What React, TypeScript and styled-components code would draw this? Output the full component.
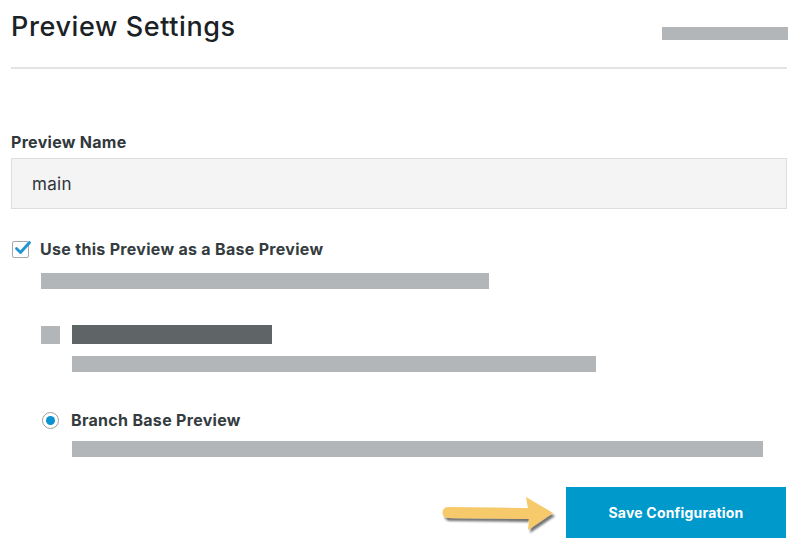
import React from "react";
import styled, { createGlobalStyle } from "styled-components";

const Global = createGlobalStyle`
  html, body { margin: 0; padding: 0; background: #ffffff; }
  body { font-family: "Inter", "Noto Sans", sans-serif; color: #212529; }
`;

const Page = styled.div`
  width: 800px;
  height: 551px;
  box-sizing: border-box;
  padding: 0 13px 0 11px;
  display: flex;
  flex-direction: column;
`;

const Header = styled.div`
  display: flex;
  justify-content: space-between;
  align-items: flex-start;
  height: 67px;
  border-bottom: 2px solid #e4e4e4;
`;

const Title = styled.h1`
  margin: 10px 0 0 0;
  font-size: 27px;
  line-height: 34px;
  font-weight: 500;
  color: #1b2226;
  letter-spacing: 0.6px;
`;

const Bar = styled.div<{ $w: number; $h?: number; $dark?: boolean }>`
  width: ${(p) => p.$w}px;
  height: ${(p) => p.$h ?? 16}px;
  background: ${(p) => (p.$dark ? "#5f6467" : "#b2b6b8")};
  flex: none;
`;

const HeaderBar = styled(Bar)`
  margin-top: 27px;
  margin-right: -1px;
`;

const Label = styled.div`
  margin-top: 62px;
  font-size: 16px;
  line-height: 22px;
  font-weight: 700;
  letter-spacing: 0.3px;
  color: #30383c;
`;

const Input = styled.div`
  margin-top: 5px;
  height: 51px;
  box-sizing: border-box;
  background: #f4f4f4;
  border: 1px solid #dedede;
  padding: 0 20px;
  display: flex;
  align-items: center;
  font-size: 17px;
  letter-spacing: 0.3px;
  color: #2e3538;
`;

const CheckRow = styled.div`
  margin-top: 30px;
  display: flex;
  align-items: center;
  gap: 11px;
  padding-left: 1px;
`;

const Box = styled.div`
  width: 17px;
  height: 17px;
  box-sizing: border-box;
  border: 1px solid #a9a9a9;
  border-radius: 2px;
  background: #fff;
  position: relative;
  flex: none;
`;

const Tick = styled.svg`
  position: absolute;
  left: 1px;
  top: -2px;
`;

const OptText = styled.span`
  font-size: 16px;
  line-height: 20px;
  font-weight: 700;
  letter-spacing: 0.3px;
  color: #343c40;
`;

const Indented = styled.div<{ $l: number; $t: number }>`
  margin-left: ${(p) => p.$l}px;
  margin-top: ${(p) => p.$t}px;
`;

const OptionRow = styled.div<{ $t: number }>`
  margin-top: ${(p) => p.$t}px;
  margin-left: 30px;
  display: flex;
  align-items: center;
  gap: 12px;
`;

const Square = styled.div`
  width: 19px;
  height: 18px;
  background: #b2b6b8;
  flex: none;
`;

const Radio = styled.div`
  width: 17px;
  height: 17px;
  box-sizing: border-box;
  border: 1px solid #9d9d9d;
  border-radius: 50%;
  margin-left: 1px;
  display: flex;
  align-items: center;
  justify-content: center;
  flex: none;
  &::after {
    content: "";
    width: 9px;
    height: 9px;
    border-radius: 50%;
    background: #0b93d1;
  }
`;

const Footer = styled.div`
  margin-top: 30px;
  display: flex;
  justify-content: flex-end;
  align-items: center;
  gap: 8px;
  margin-right: 1px;
`;

const Button = styled.button`
  width: 220px;
  height: 51px;
  border: none;
  background: #0099cc;
  color: #ffffff;
  font-family: "Inter", "Noto Sans", sans-serif;
  font-size: 14px;
  letter-spacing: 0.2px;
  font-weight: 700;
  cursor: pointer;
`;

const Arrow = () => (
  <svg width="116" height="40" viewBox="0 0 116 40" style={{ marginTop: 4 }}>
    <defs>
      <filter id="sh" x="-10%" y="-20%" width="130%" height="160%">
        <feGaussianBlur in="SourceAlpha" stdDeviation="1.2" />
        <feOffset dx="1.5" dy="2.5" />
        <feComponentTransfer>
          <feFuncA type="linear" slope="0.55" />
        </feComponentTransfer>
        <feMerge>
          <feMergeNode />
          <feMergeNode in="SourceGraphic" />
        </feMerge>
      </filter>
    </defs>
    <path
      d="M6 12 L86 13 L84 2 L111 18 L86 35 L87 24 L6 23 A5.5 5.5 0 0 1 6 12 Z"
      fill="#f6ca6a"
      filter="url(#sh)"
      strokeLinejoin="round"
    />
  </svg>
);

export default function App() {
  return (
    <>
      <Global />
      <Page>
        <Header>
          <Title>Preview Settings</Title>
          <HeaderBar $w={126} $h={13} />
        </Header>
        <Label>Preview Name</Label>
        <Input>main</Input>
        <CheckRow>
          <Box>
            <Tick width="18" height="16" viewBox="0 0 18 16">
              <path d="M2.5 8.5 L6.5 12.5 L15.5 2.5" fill="none" stroke="#1f94d2" strokeWidth="2.8" strokeLinecap="round" strokeLinejoin="round" />
            </Tick>
          </Box>
          <OptText>Use this Preview as a Base Preview</OptText>
        </CheckRow>
        <Indented $l={30} $t={14}>
          <Bar $w={448} />
        </Indented>
        <OptionRow $t={36}>
          <Square />
          <Bar $w={200} $h={19} $dark />
        </OptionRow>
        <Indented $l={61} $t={12}>
          <Bar $w={524} />
        </Indented>
        <OptionRow $t={38}>
          <Radio />
          <OptText>Branch Base Preview</OptText>
        </OptionRow>
        <Indented $l={61} $t={11}>
          <Bar $w={691} />
        </Indented>
        <Footer>
          <Arrow />
          <Button>Save Configuration</Button>
        </Footer>
      </Page>
    </>
  );
}
